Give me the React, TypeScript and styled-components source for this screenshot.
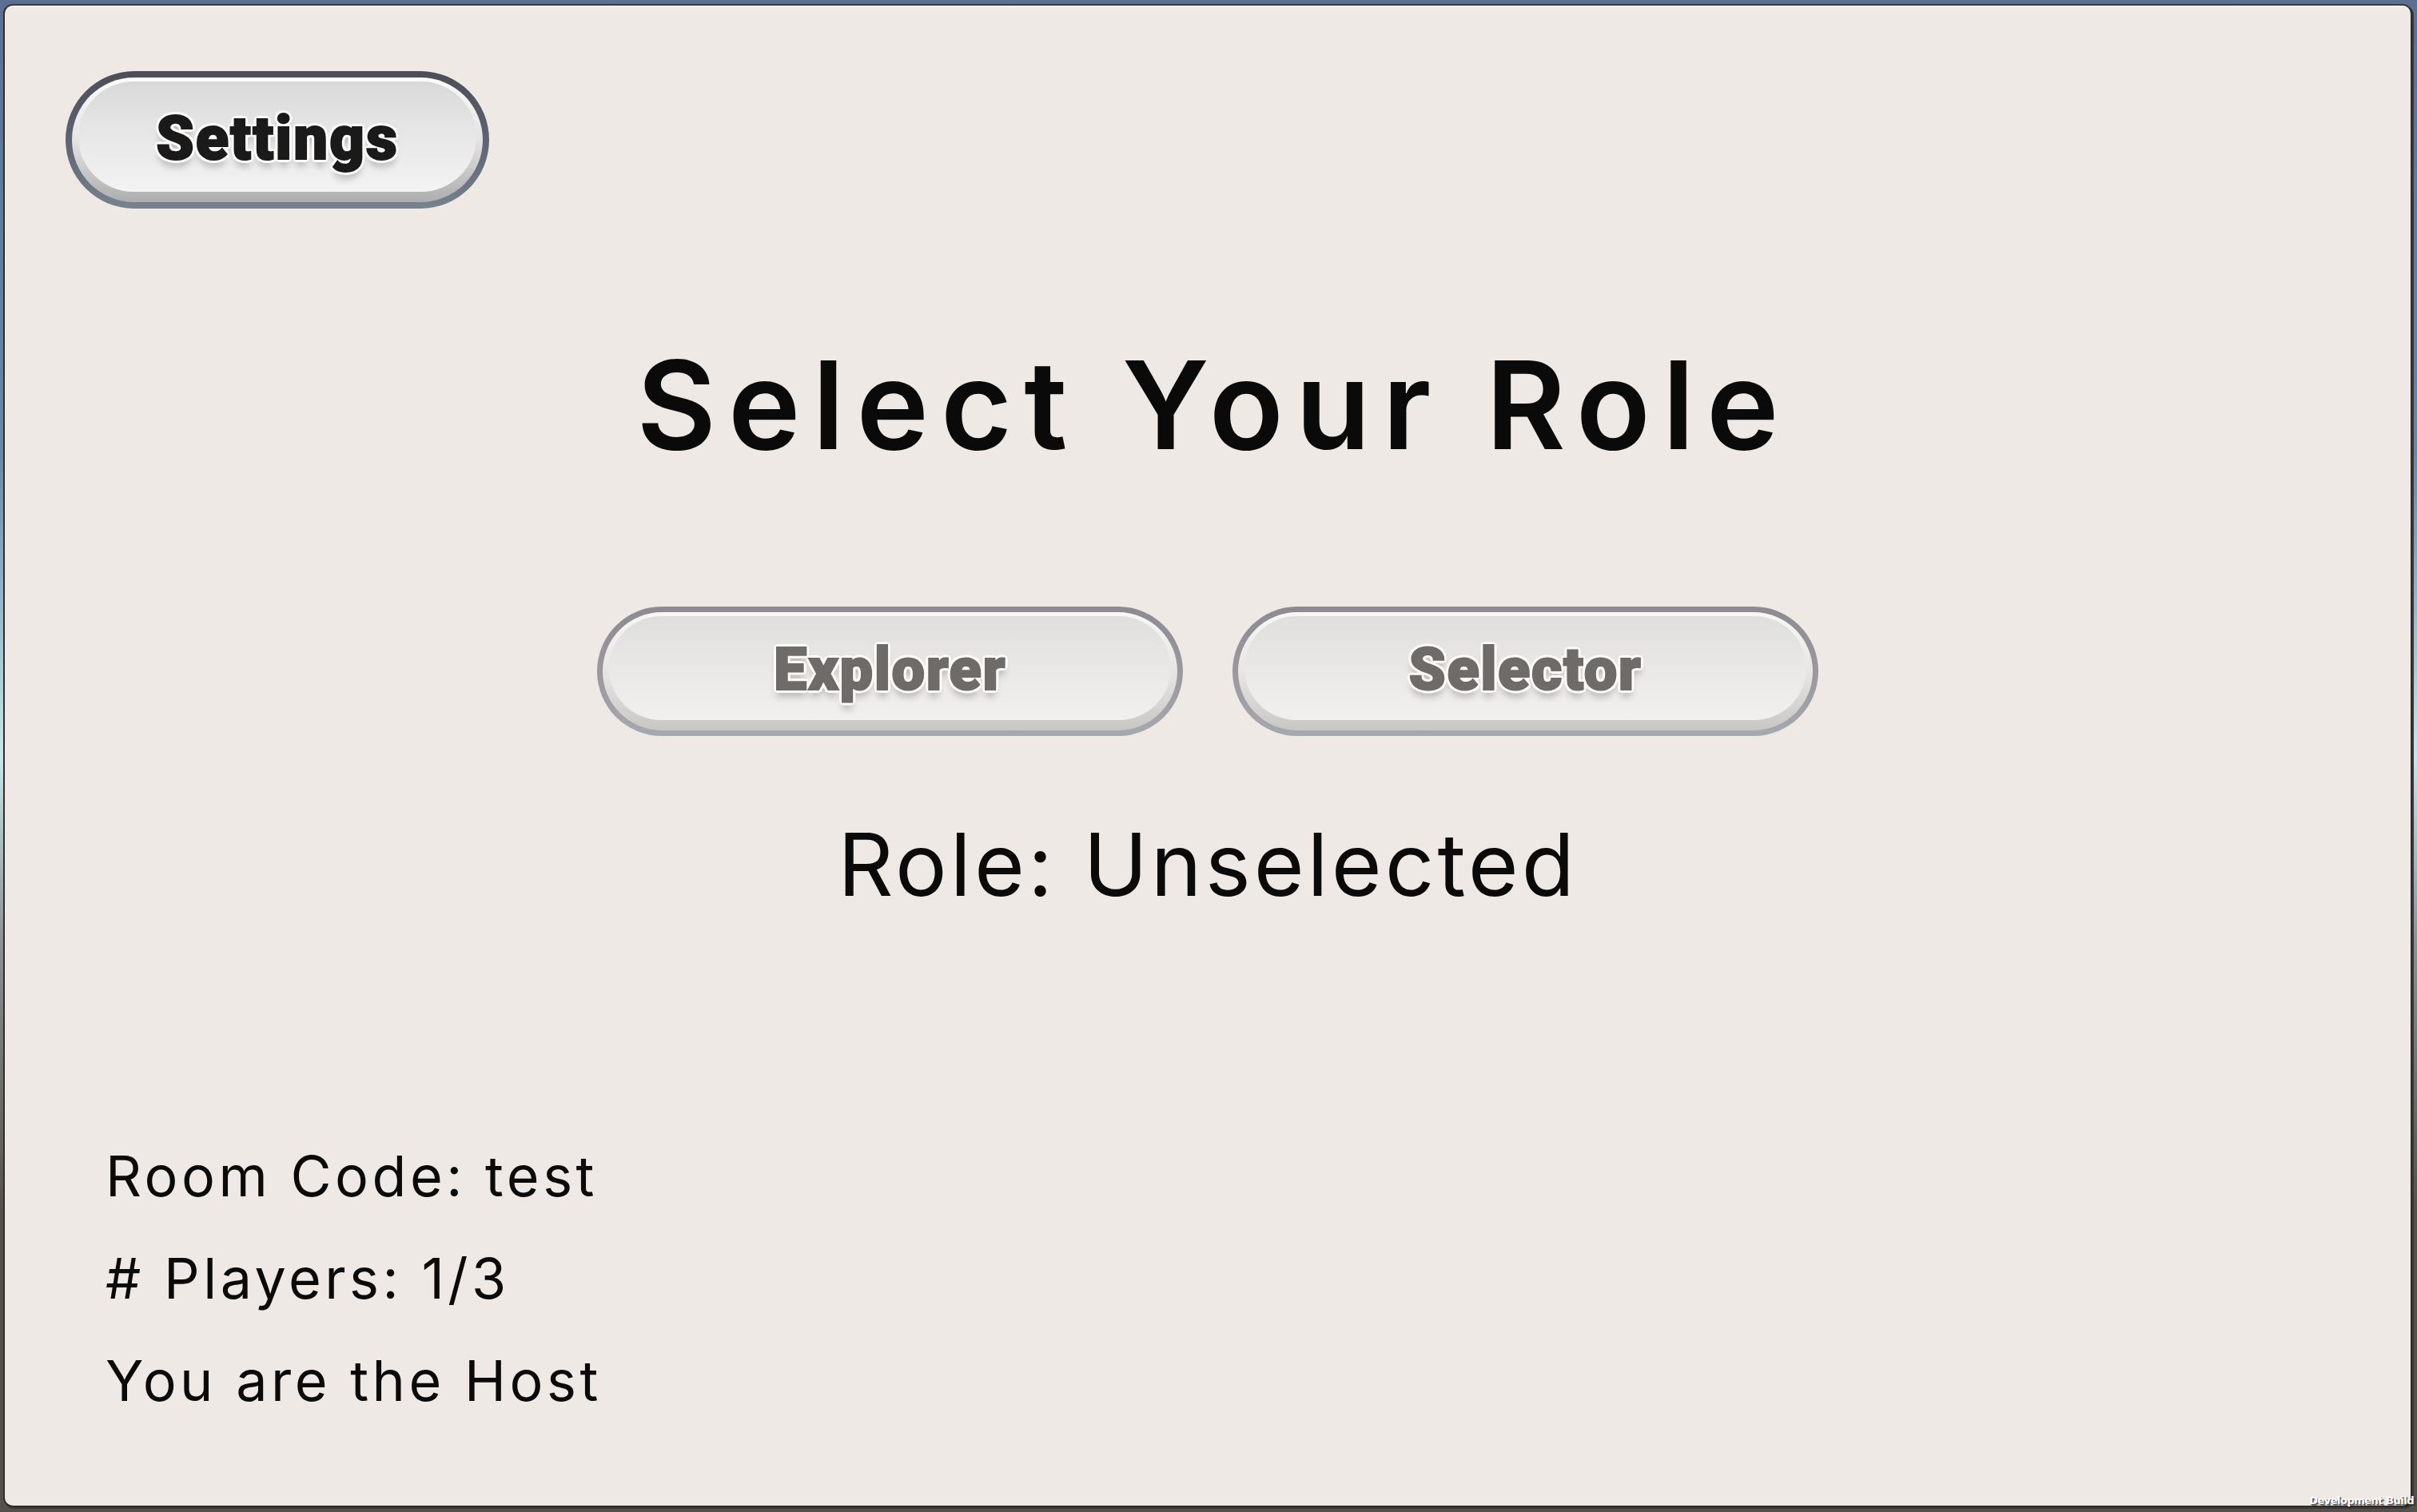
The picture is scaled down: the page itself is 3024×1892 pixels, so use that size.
import styled, { createGlobalStyle } from "styled-components";

const GlobalStyle = createGlobalStyle`
  html, body {
    margin: 0;
    padding: 0;
    height: 100%;
  }
  body {
    font-family: "Inter", "Liberation Sans", sans-serif;
    overflow: hidden;
  }
`;

type ToneProps = {
  tone: "dark" | "muted";
};

const Desktop = styled.div`
  position: relative;
  box-sizing: border-box;
  width: 100vw;
  height: 100vh;
  padding: 5px 6px 6px 4px;
  display: flex;
  background: linear-gradient(
    180deg,
    #5b6f93 0%,
    #6d86a4 30%,
    #c9e6ec 50%,
    #8a9494 62%,
    #55504b 80%,
    #55504b 100%
  );
`;

const Window = styled.div`
  flex: 1;
  box-sizing: border-box;
  display: flex;
  flex-direction: column;
  align-items: center;
  background: #eee9e5;
  border: 2px solid #2e2d2c;
  border-top-color: #3a3a40;
  border-radius: 12px;
  box-shadow: inset 0 2px 0 #f8f5f1, 2px 2px 0 #3b3835;
  padding: 0 0 92px;
`;

const TopBar = styled.div`
  align-self: stretch;
  display: flex;
  padding: 82px 0 0 76px;
`;

const PillOuter = styled.button<ToneProps & { w: number; h: number }>`
  box-sizing: border-box;
  width: ${(p) => p.w}px;
  height: ${(p) => p.h}px;
  padding: ${(p) => (p.tone === "dark" ? 8 : 7)}px;
  border: none;
  border-radius: 999px;
  cursor: pointer;
  display: flex;
  background: ${(p) =>
    p.tone === "dark"
      ? "linear-gradient(180deg, #4c4d59 0%, #5f6675 55%, #76828e 100%)"
      : "linear-gradient(180deg, #8d8b92 0%, #9a9aa0 55%, #a5a9af 100%)"};
`;

const PillRim = styled.div<ToneProps>`
  flex: 1;
  display: flex;
  border-radius: 999px;
  padding: 5px 8px 13px;
  background: ${(p) =>
    p.tone === "dark"
      ? "linear-gradient(180deg, #fbfbfb 0%, #e4e4e4 50%, #adadad 100%)"
      : "linear-gradient(180deg, #f7f7f6 0%, #e6e6e5 50%, #c8c7c4 100%)"};
`;

const PillFace = styled.div<ToneProps>`
  flex: 1;
  display: flex;
  align-items: center;
  justify-content: center;
  border-radius: 999px;
  background: ${(p) =>
    p.tone === "dark"
      ? "linear-gradient(180deg, #d9d9d9 0%, #e6e6e6 45%, #f3f3f3 100%)"
      : "linear-gradient(180deg, #dfdfde 0%, #e8e7e6 45%, #f1f0ee 100%)"};
`;

const PillLabel = styled.span<ToneProps & { size: number }>`
  font-family: "Roboto", "Liberation Sans", sans-serif;
  font-weight: 900;
  font-size: ${(p) => p.size}px;
  line-height: 1;
  letter-spacing: ${(p) => (p.tone === "dark" ? 2 : 1.5)}px;
  color: ${(p) => (p.tone === "dark" ? "#1b1a1a" : "#6f6b69")};
  -webkit-text-stroke: 2px ${(p) => (p.tone === "dark" ? "#1b1a1a" : "#6f6b69")};
  margin-top: 4px;
  text-shadow:
    4px 0 0 #fdfcfb, -4px 0 0 #fdfcfb, 0 4px 0 #fdfcfb, 0 -4px 0 #fdfcfb,
    3px 3px 0 #fdfcfb, -3px 3px 0 #fdfcfb, 3px -3px 0 #fdfcfb, -3px -3px 0 #fdfcfb,
    0 9px 8px rgba(0, 0, 0, 0.22);
`;

const Title = styled.h1`
  margin: 169px 0 0;
  font-family: "Inter", "Liberation Sans", sans-serif;
  font-weight: 600;
  font-size: 153px;
  line-height: 1;
  letter-spacing: 15px;
  text-indent: 15px;
  color: #0a0a0a;
`;

const RoleRow = styled.div`
  display: flex;
  gap: 62px;
  margin-top: 176px;
`;

const RoleText = styled.div`
  margin-top: 107px;
  font-family: "Inter", "Liberation Sans", sans-serif;
  font-weight: 400;
  font-size: 108px;
  line-height: 1;
  letter-spacing: 4px;
  color: #0a0a0a;
`;

const InfoList = styled.div`
  margin-top: auto;
  align-self: stretch;
  display: flex;
  flex-direction: column;
  padding-left: 126px;
`;

const InfoLine = styled.div`
  font-family: "Inter", "Liberation Sans", sans-serif;
  font-size: 70px;
  line-height: 128px;
  letter-spacing: 4.5px;
  color: #0a0a0a;
`;

const BuildTag = styled.div`
  position: absolute;
  right: 4px;
  bottom: 7px;
  font-family: "DejaVu Sans", sans-serif;
  font-weight: 700;
  font-size: 13px;
  letter-spacing: -0.5px;
  color: #ffffff;
  text-shadow: 1px 1px 0 #555, 2px 2px 1px rgba(0, 0, 0, 0.5);
`;

const roles = ["Explorer", "Selector"];

const App = () => {
  return (
    <>
      <GlobalStyle />
      <Desktop>
        <Window>
          <TopBar>
            <PillOuter tone="dark" w={530} h={172}>
              <PillRim tone="dark">
                <PillFace tone="dark">
                  <PillLabel tone="dark" size={76}>
                    Settings
                  </PillLabel>
                </PillFace>
              </PillRim>
            </PillOuter>
          </TopBar>
          <Title>Select Your Role</Title>
          <RoleRow>
            {roles.map((role) => (
              <PillOuter key={role} tone="muted" w={733} h={162}>
                <PillRim tone="muted">
                  <PillFace tone="muted">
                    <PillLabel tone="muted" size={74}>
                      {role}
                    </PillLabel>
                  </PillFace>
                </PillRim>
              </PillOuter>
            ))}
          </RoleRow>
          <RoleText>Role: Unselected</RoleText>
          <InfoList>
            <InfoLine>Room Code: test</InfoLine>
            <InfoLine># Players: 1/3</InfoLine>
            <InfoLine>You are the Host</InfoLine>
          </InfoList>
        </Window>
        <BuildTag>Development Build</BuildTag>
      </Desktop>
    </>
  );
};

export default App;
